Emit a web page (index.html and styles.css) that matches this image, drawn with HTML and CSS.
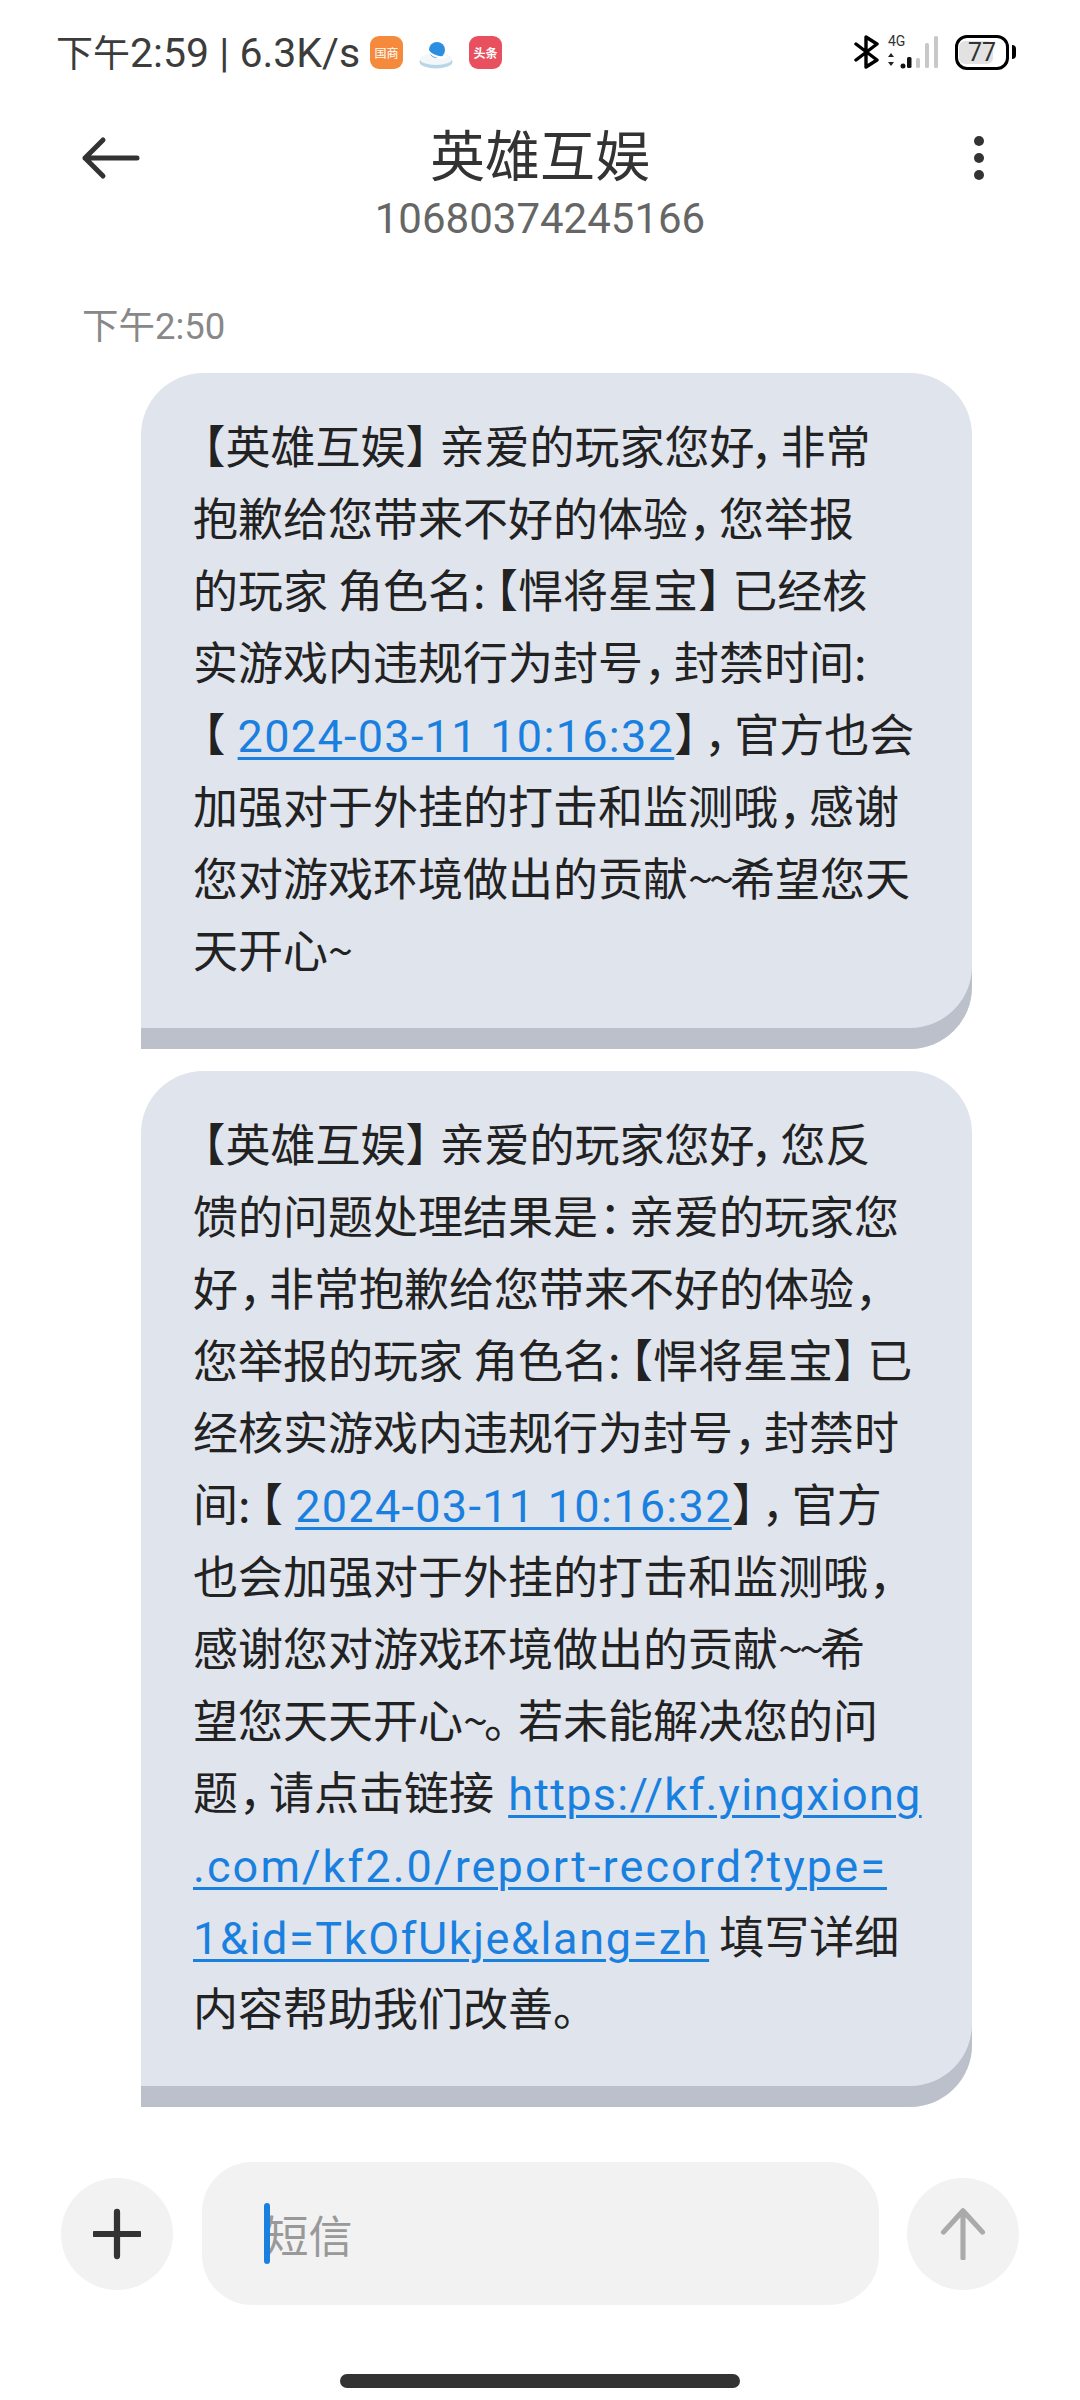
FILE: index.html
```html
<!DOCTYPE html>
<html lang="zh-CN">
<head>
    <meta charset="UTF-8">
    <meta name="viewport" content="width=device-width, initial-scale=1.0">
    <title>英雄互娱</title>
    <link rel="stylesheet" href="styles.css">
</head>
<body>
    <div class="phone">
        <div class="statusbar">
            <div class="status-left">
                <span class="status-text"><span class="status-cjk">下午</span>2:59 | 6.3K/s</span>
                <span class="notif notif-orange">国商</span>
                <svg class="notif-svg" viewBox="0 0 34 34">
                    <ellipse cx="17" cy="27" rx="16.5" ry="6.5" fill="#b9d6e6"/>
                    <ellipse cx="17" cy="24" rx="16" ry="6" fill="#f3f7fa"/>
                    <circle cx="18" cy="15" r="8" fill="#2c8ee0"/>
                    <path d="M7 11 C9 19 18 24 28 22" stroke="#ffffff" stroke-width="2" fill="none"/>
                </svg>
                <span class="notif notif-red">头条</span>
            </div>
            <div class="status-right">
                <svg class="bt-icon" viewBox="0 0 26 34">
                    <path d="M2 9 L23 25 L12 32 L12 2 L23 9 L2 25" fill="none" stroke="#000" stroke-width="3.4" stroke-linejoin="round" stroke-linecap="round"/>
                </svg>
                <div class="signal">
                    <span class="net-label">4G</span>
                    <svg class="signal-svg" viewBox="0 0 54 34">
                        <path d="M2 22 L5 18 L8 22 Z M2 27 L8 27 L5 31 Z" fill="#222"/>
                        <circle cx="17" cy="31" r="2.5" fill="#111"/>
                        <rect x="21" y="22" width="4.5" height="11" rx="1.5" fill="#111"/>
                        <rect x="30" y="23" width="4" height="10" rx="1.5" fill="#c8c8c8"/>
                        <rect x="39" y="8" width="4" height="25" rx="1.5" fill="#c8c8c8"/>
                        <rect x="48" y="1" width="4" height="32" rx="1.5" fill="#c8c8c8"/>
                    </svg>
                </div>
                <div class="battery">
                    <div class="battery-body"><span class="battery-level">77</span></div>
                    <span class="battery-cap"></span>
                </div>
            </div>
        </div>

        <header class="topbar">
            <svg class="back-icon" viewBox="0 0 60 44">
                <path d="M56 22 H4 M22 4 L4 22 L22 40" fill="none" stroke="#333" stroke-width="5" stroke-linecap="round" stroke-linejoin="round"/>
            </svg>
            <div class="contact">
                <h1>英雄互娱</h1>
                <p>10680374245166</p>
            </div>
            <div class="more-icon"><i></i><i></i><i></i></div>
        </header>

        <main class="thread">
            <div class="timestamp">下午2:50</div>
            <div class="bubble">
                <span class="lb">【</span>英雄互娱<span class="rb">】</span>亲爱的玩家您好<span class="tight">，</span>非常<br>
                抱歉给您带来不好的体验<span class="tight">，</span>您举报<br>
                的玩家 角色名:<span class="lb">【</span>悍将星宝<span class="rb">】</span>已经核<br>
                实游戏内违规行为封号<span class="tight">，</span>封禁时间:<br>
                <span class="lb">【</span> <a href="#">2024-03-11 10:16:32</a><span class="rb">】</span><span class="tight">，</span>官方也会<br>
                加强对于外挂的打击和监测哦<span class="tight">，</span>感谢<br>
                您对游戏环境做出的贡献<span class="tilde">~~</span>希望您天<br>
                天开心<span class="tilde">~</span>
            </div>
            <div class="bubble">
                <span class="lb">【</span>英雄互娱<span class="rb">】</span>亲爱的玩家您好<span class="tight">，</span>您反<br>
                馈的问题处理结果是<span class="tight">：</span>亲爱的玩家您<br>
                好<span class="tight">，</span>非常抱歉给您带来不好的体验<span class="tight">，</span><br>
                您举报的玩家 角色名:<span class="lb">【</span>悍将星宝<span class="rb">】</span>已<br>
                经核实游戏内违规行为封号<span class="tight">，</span>封禁时<br>
                间:<span class="lb">【</span> <a href="#">2024-03-11 10:16:32</a><span class="rb">】</span><span class="tight">，</span>官方<br>
                也会加强对于外挂的打击和监测哦<span class="tight">，</span><br>
                感谢您对游戏环境做出的贡献<span class="tilde">~~</span>希<br>
                望您天天开心<span class="tilde">~</span><span class="stop">。</span>若未能解决您的问<br>
                题<span class="tight">，</span>请点击链接 <a class="link-gap" href="#">https://kf.yingxiong</a><br>
                <a class="link-wide" href="#">.com/kf2.0/report-record?type=</a><br>
                <a class="link-mid" href="#">1&amp;id=TkOfUkje&amp;lang=zh</a> 填写详细<br>
                内容帮助我们改善。
            </div>
        </main>

        <footer class="composer">
            <button class="round-btn">
                <svg viewBox="0 0 50 50"><path d="M25 2 V48 M2 25 H48" stroke="#333" stroke-width="6.5" stroke-linecap="round" fill="none"/></svg>
            </button>
            <div class="input-box">
                <span class="caret"></span>
                <span class="placeholder">短信</span>
            </div>
            <button class="round-btn">
                <svg viewBox="0 0 50 56"><path d="M25 54 V4 M4 26 L25 3 L46 26" stroke="#aaa" stroke-width="5.5" stroke-linecap="round" stroke-linejoin="round" fill="none"/></svg>
            </button>
        </footer>
        <div class="home-indicator"></div>
    </div>
</body>
</html>
```

FILE: styles.css
```css
* {
    box-sizing: border-box;
    margin: 0;
    padding: 0;
}

html, body {
    background: #fff;
    height: 100%;
}

body {
    font-family: "Noto Sans CJK SC", Roboto, sans-serif;
    color: #222;
}

.phone {
    width: 1080px;
    height: 2400px;
    display: flex;
    flex-direction: column;
    overflow: hidden;
}

/* status bar */
.statusbar {
    height: 104px;
    padding: 0 64px 0 56px;
    display: flex;
    justify-content: space-between;
    align-items: center;
}

.status-left, .status-right {
    display: flex;
    align-items: center;
}

.status-text {
    font-family: Roboto, "Noto Sans CJK SC", sans-serif;
    font-size: 41px;
    line-height: 48px;
    color: #3c3c3c;
    margin: 2px 10px 0 0;
    white-space: nowrap;
}

.status-cjk {
    font-size: 37px;
    line-height: 1;
}

.notif {
    width: 33px;
    height: 33px;
    border-radius: 9px;
    color: #fff;
    font-size: 12px;
    display: flex;
    align-items: center;
    justify-content: center;
    white-space: nowrap;
}

.notif-orange { background: #f58a3c; }
.notif-red { background: #e8505f; font-weight: 700; }

.notif-svg {
    width: 34px;
    height: 34px;
    margin: 0 16px;
}

.bt-icon {
    width: 26px;
    height: 34px;
    margin-right: 6px;
}

.signal {
    position: relative;
    width: 54px;
    height: 34px;
    margin-right: 15px;
}

.signal-svg {
    width: 54px;
    height: 34px;
    display: block;
}

.net-label {
    position: absolute;
    left: 2px;
    top: -1px;
    font-family: Roboto, sans-serif;
    font-size: 14px;
    line-height: 14px;
    color: #333;
}

.battery {
    display: flex;
    align-items: center;
}

.battery-body {
    width: 54px;
    height: 35px;
    border: 3px solid #000;
    border-radius: 12px;
    padding: 3px 1px;
    display: flex;
}

.battery-level {
    width: 34px;
    background: #e2e2e2;
    border-radius: 6px;
    padding-left: 9px;
    font-family: Roboto, sans-serif;
    font-size: 25px;
    line-height: 23px;
    color: #333;
    white-space: nowrap;
}

.battery-cap {
    width: 4px;
    height: 14px;
    margin-left: 3px;
    border-radius: 0 4px 4px 0;
    background: #000;
}

/* top bar */
.topbar {
    height: 140px;
    padding: 0 91px;
    display: grid;
    grid-template-columns: 1fr auto 1fr;
    align-items: start;
}

.back-icon {
    width: 60px;
    height: 44px;
    margin: 32px 0 0 -10px;
}

.contact {
    text-align: center;
}

.contact h1 {
    font-size: 55px;
    font-weight: 400;
    line-height: 78px;
    color: #333;
    margin: 9px 0 3px;
}

.contact p {
    font-family: Roboto, sans-serif;
    font-size: 42px;
    line-height: 50px;
    color: #666;
}

.more-icon {
    justify-self: end;
    width: 20px;
    margin-top: 32px;
    display: flex;
    flex-direction: column;
    gap: 7px;
}

.more-icon i {
    width: 10px;
    height: 10px;
    margin: 0 auto;
    border-radius: 50%;
    background: #333;
}

/* messages */
.thread {
    flex: 1;
    padding: 61px 108px 0 82px;
}

.timestamp {
    font-family: Roboto, "Noto Sans CJK SC", sans-serif;
    font-size: 36.5px;
    line-height: 44px;
    color: #888;
    margin-bottom: 24px;
}

.bubble {
    margin-left: 59px;
    margin-bottom: 22px;
    padding: 36px 30px 64px 52px;
    background: #e0e4ed;
    border-radius: 62px 62px 62px 0;
    box-shadow: inset 0 -21px 0 #bbc0ca;
    font-size: 45px;
    line-height: 72px;
    color: #222;
    white-space: nowrap;
    text-spacing-trim: space-all;
}

/* the phone font sets brackets and full-width punctuation narrower */
.lb { font-feature-settings: "halt"; margin-left: 10px; }
.rb { letter-spacing: -11px; }
.tight { margin-left: 1px; letter-spacing: -15px; }
.rb + .tight { margin-left: -4px; }
.stop { letter-spacing: -11px; }
.tilde { letter-spacing: -4px; }

.bubble a {
    color: #1a80e0;
    font-family: Roboto, sans-serif;
    letter-spacing: 1.3px;
    line-height: 1;
    text-decoration: underline;
    text-decoration-thickness: 3px;
    text-underline-offset: 5px;
}

.bubble .lb + a { margin-left: 2px; }
.bubble .link-gap { margin-left: 4px; }
.bubble .link-wide { letter-spacing: 2.1px; }
.bubble .link-mid { letter-spacing: 1.6px; }

/* input row */
.composer {
    height: 143px;
    margin-bottom: 69px;
    padding: 0 61px;
    display: flex;
    align-items: center;
    justify-content: space-between;
}

.round-btn {
    width: 112px;
    height: 112px;
    border: 0;
    border-radius: 50%;
    background: #f2f2f2;
    display: flex;
    align-items: center;
    justify-content: center;
}

.round-btn svg {
    width: 48px;
    height: 52px;
}

.input-box {
    width: 677px;
    height: 143px;
    border-radius: 50px;
    background: #f2f2f2;
    padding-left: 63px;
    display: flex;
    align-items: center;
    position: relative;
}

.caret {
    position: absolute;
    left: 62px;
    top: 41px;
    width: 6px;
    height: 61px;
    border-radius: 3px;
    background: #1a80e0;
}

.placeholder {
    font-size: 44px;
    color: #999;
}

.home-indicator {
    width: 400px;
    height: 14px;
    margin: 0 auto 12px;
    border-radius: 7px;
    background: #333;
    flex-shrink: 0;
}
```
